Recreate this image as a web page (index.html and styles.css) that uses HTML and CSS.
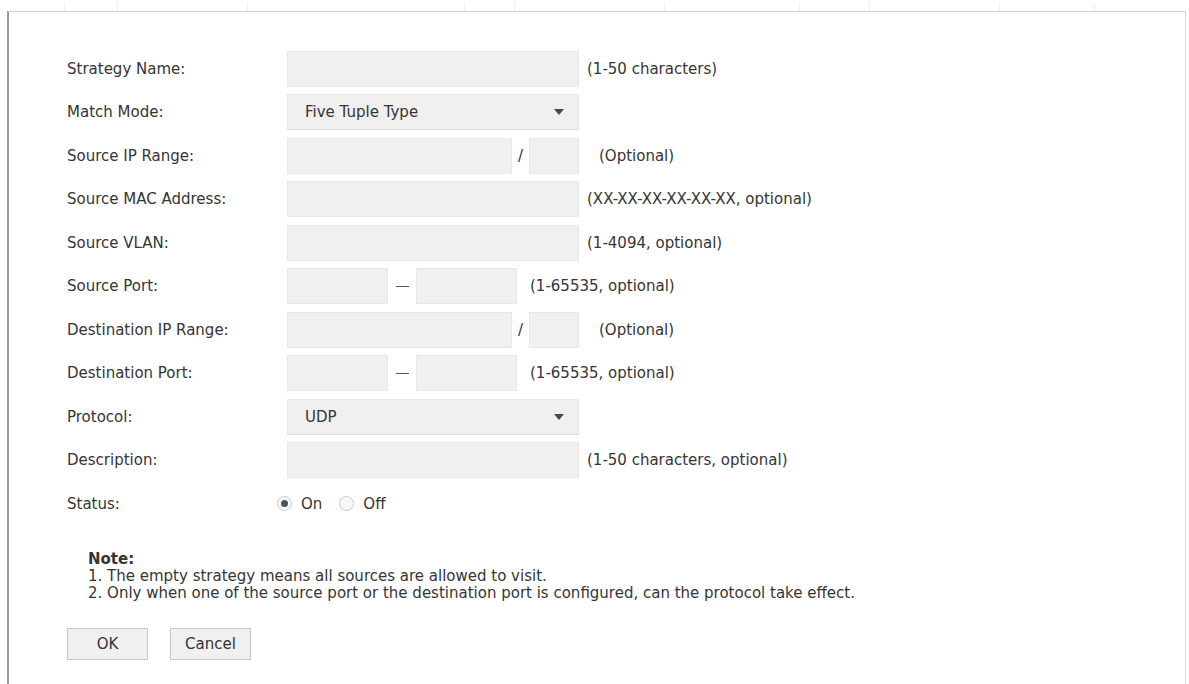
FILE: index.html
```html
<!DOCTYPE html>
<html lang="en">
<head>
    <meta charset="UTF-8">
    <meta name="viewport" content="width=device-width, initial-scale=1.0">
    <title>Strategy Config</title>
    <link rel="stylesheet" href="styles.css">
</head>
<body>
    <div class="tab-strip">
        <span class="tab t1"></span>
        <span class="tab t2"></span>
        <span class="tab t3"></span>
        <span class="tab t4"></span>
        <span class="tab t5"></span>
        <span class="tab t6"></span>
        <span class="tab t7"></span>
        <span class="tab t8"></span>
        <span class="tab t9"></span>
        <span class="tab t10"></span>
    </div>
    <div class="panel">
        <form class="strategy-form">
            <div class="row">
                <label>Strategy Name:</label>
                <input type="text" class="field wide">
                <span class="hint">(1-50 characters)</span>
            </div>
            <div class="row">
                <label>Match Mode:</label>
                <div class="select wide">
                    <span>Five Tuple Type</span>
                    <i class="caret"></i>
                </div>
            </div>
            <div class="row">
                <label>Source IP Range:</label>
                <input type="text" class="field ip">
                <span class="slash">/</span>
                <input type="text" class="field mask">
                <span class="hint gap">(Optional)</span>
            </div>
            <div class="row">
                <label>Source MAC Address:</label>
                <input type="text" class="field wide">
                <span class="hint">(XX-XX-XX-XX-XX-XX, optional)</span>
            </div>
            <div class="row">
                <label>Source VLAN:</label>
                <input type="text" class="field wide">
                <span class="hint">(1-4094, optional)</span>
            </div>
            <div class="row">
                <label>Source Port:</label>
                <input type="text" class="field port">
                <span class="dash"></span>
                <input type="text" class="field port">
                <span class="hint short">(1-65535, optional)</span>
            </div>
            <div class="row">
                <label>Destination IP Range:</label>
                <input type="text" class="field ip">
                <span class="slash">/</span>
                <input type="text" class="field mask">
                <span class="hint gap">(Optional)</span>
            </div>
            <div class="row">
                <label>Destination Port:</label>
                <input type="text" class="field port">
                <span class="dash"></span>
                <input type="text" class="field port">
                <span class="hint short">(1-65535, optional)</span>
            </div>
            <div class="row">
                <label>Protocol:</label>
                <div class="select wide">
                    <span>UDP</span>
                    <i class="caret"></i>
                </div>
            </div>
            <div class="row">
                <label>Description:</label>
                <input type="text" class="field wide">
                <span class="hint">(1-50 characters, optional)</span>
            </div>
            <div class="row">
                <label>Status:</label>
                <div class="radios">
                    <span class="radio checked"></span><span class="radio-text">On</span>
                    <span class="radio"></span><span class="radio-text">Off</span>
                </div>
            </div>

            <div class="note">
                <b>Note:</b><br>
                1. The empty strategy means all sources are allowed to visit.<br>
                2. Only when one of the source port or the destination port is configured, can the protocol take effect.
            </div>

            <div class="actions">
                <button type="button">OK</button>
                <button type="button">Cancel</button>
            </div>
        </form>
    </div>
</body>
</html>
```

FILE: styles.css
```css
* {
    margin: 0;
    padding: 0;
    box-sizing: border-box;
}

body {
    background: #ffffff;
    color: #353535;
    font-family: 'DejaVu Sans', Verdana, sans-serif;
    font-size: 15px;
    padding: 0 3px 0 7px;
}

/* faint tab separators above the panel */
.tab-strip {
    display: flex;
    height: 11px;
}

.tab {
    border-right: 1px solid #ececec;
    height: 8px;
    margin-top: 3px;
}

.t1 { width: 58px; }
.t2 { width: 53px; }
.t3 { width: 130px; }
.t4 { width: 217px; }
.t5 { width: 50px; }
.t6 { width: 150px; }
.t7 { width: 135px; }
.t8 { width: 70px; }
.t9 { width: 130px; }
.t10 { width: 95px; }

.panel {
    border-top: 1px solid #cfcfcf;
    border-left: 2px solid #9a9a9a;
    border-right: 1px solid #d8d8d8;
    height: 673px;
    padding: 35px 0 0 58px;
}

.row {
    display: flex;
    align-items: center;
    height: 43.5px;
}

.row label {
    width: 220px;
    flex-shrink: 0;
}

.field {
    height: 36px;
    background: #f1f0ee;
    border: 1px solid #e8e7e4;
    font: inherit;
    outline: none;
}

.wide {
    width: 292px;
}

.ip {
    width: 225px;
}

.mask {
    width: 50px;
}

.port {
    width: 101px;
}

.slash {
    width: 17px;
    text-align: center;
}

.dash {
    width: 28px;
    height: 1px;
    display: flex;
    justify-content: center;
}

.dash::before {
    content: '';
    width: 13px;
    border-top: 1px solid #555;
}

.hint {
    margin-left: 8px;
}

.hint.gap {
    margin-left: 20px;
}

.hint.short {
    margin-left: 13px;
}

.select {
    height: 36px;
    background: #f1f0ee;
    border: 1px solid #e8e7e4;
    border-bottom-color: #dcdbd8;
    display: flex;
    align-items: center;
    justify-content: space-between;
    padding: 0 14px 0 17px;
}

.caret {
    width: 0;
    height: 0;
    border-left: 5px solid transparent;
    border-right: 5px solid transparent;
    border-top: 6px solid #3e4c5a;
}

.radios {
    display: flex;
    align-items: center;
    margin-left: -10px;
}

.radio {
    width: 15px;
    height: 15px;
    border-radius: 50%;
    border: 1px solid #c9c9c9;
    background: #f7f7f7;
    margin-right: 9px;
    display: flex;
    align-items: center;
    justify-content: center;
}

.radio.checked::after {
    content: '';
    width: 7px;
    height: 7px;
    border-radius: 50%;
    background: #455463;
}

.radio-text {
    margin-right: 17px;
}

.note {
    margin: 25px 0 0 21px;
    line-height: 17px;
}

.note b {
    font-weight: bold;
}

.actions {
    display: flex;
    gap: 22px;
    margin-top: 26px;
}

.actions button {
    width: 81px;
    height: 32px;
    background: #f0f0f0;
    border: 1px solid #c6c6c6;
    color: #333;
    font: inherit;
}
```
